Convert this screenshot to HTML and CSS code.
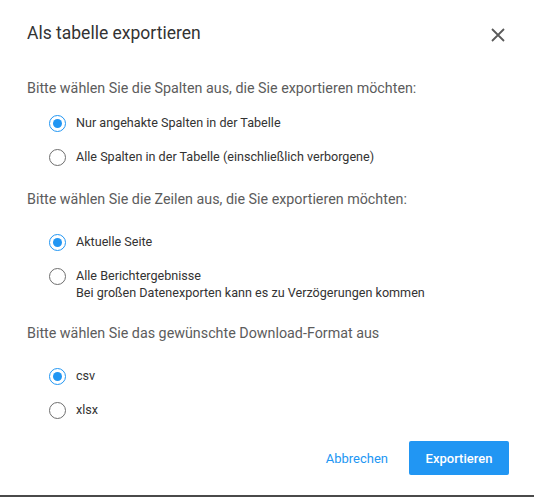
FILE: index.html
```html
<!DOCTYPE html>
<html lang="de">
<head>
<meta charset="utf-8">
<link rel="stylesheet" href="styles.css">
</head>
<body>
<div class="dialog">
  <div class="header">
    <h1 class="title">Als tabelle exportieren</h1>
    <button class="close" aria-label="Schließen">
      <svg width="14" height="14" viewBox="0 0 14 14"><path d="M1 1L13 13M13 1L1 13" stroke="#5a5a5a" stroke-width="1.8" fill="none"/></svg>
    </button>
  </div>

  <p class="label first">Bitte wählen Sie die Spalten aus, die Sie exportieren möchten:</p>
  <div class="options first">
    <div class="option"><span class="radio checked"></span><span class="text">Nur angehakte Spalten in der Tabelle</span></div>
    <div class="option"><span class="radio"></span><span class="text">Alle Spalten in der Tabelle (einschließlich verborgene)</span></div>
  </div>

  <p class="label">Bitte wählen Sie die Zeilen aus, die Sie exportieren möchten:</p>
  <div class="options">
    <div class="option"><span class="radio checked"></span><span class="text">Aktuelle Seite</span></div>
    <div class="option multi"><span class="radio"></span><span class="text">Alle Berichtergebnisse<br>Bei großen Datenexporten kann es zu Verzögerungen kommen</span></div>
  </div>

  <p class="label">Bitte wählen Sie das gewünschte Download-Format aus</p>
  <div class="options">
    <div class="option"><span class="radio checked"></span><span class="text">csv</span></div>
    <div class="option"><span class="radio"></span><span class="text">xlsx</span></div>
  </div>

  <div class="actions">
    <button class="btn-text">Abbrechen</button>
    <button class="btn-primary">Exportieren</button>
  </div>
</div>
<div class="backdrop"></div>
</body>
</html>
```
FILE: styles.css
```css
* { box-sizing: border-box; }
html, body { margin: 0; padding: 0; }
body {
  font-family: Roboto, "Noto Sans", Arial, sans-serif;
  background: #fff;
  width: 534px;
  height: 497px;
  overflow: hidden;
}
.dialog {
  height: 495px;
  background: #fff;
  padding: 21px 25px 0 27px;
}
.header {
  display: flex;
  justify-content: space-between;
  align-items: center;
  height: 24px;
}
.title {
  margin: 0;
  font-size: 17.5px;
  font-weight: 400;
  line-height: 24px;
  color: #333;
}
.close {
  border: 0;
  background: none;
  padding: 0;
  margin-right: 4px;
  margin-top: 3px;
  width: 14px;
  height: 14px;
  display: flex;
}
.label {
  margin: 22px 0 0;
  font-size: 14.3px;
  line-height: 20px;
  color: #5c5c5c;
}
.label.first { margin-top: 33px; }
.options {
  display: flex;
  flex-direction: column;
  gap: 14px;
  margin-top: 23px;
  padding-left: 22px;
}
.options.first { margin-top: 15px; }
.option {
  display: flex;
  align-items: center;
  gap: 10px;
  min-height: 20px;
  font-size: 12.6px;
  color: #333;
}
.option.multi { align-items: flex-start; }
.option.multi .text { line-height: 17px; margin-top: 1px; }
.option.multi .radio { margin-top: 2px; }
.radio {
  flex: none;
  width: 17px;
  height: 17px;
  border-radius: 50%;
  border: 1.5px solid #6e6e6e;
  display: flex;
  align-items: center;
  justify-content: center;
}
.radio.checked { border-color: #2196f3; }
.radio.checked::after {
  content: "";
  width: 9px;
  height: 9px;
  border-radius: 50%;
  background: #2196f3;
}
.text { line-height: 20px; }
.actions {
  display: flex;
  justify-content: flex-end;
  align-items: center;
  gap: 21px;
  margin-top: 21px;
}
.btn-text {
  border: 0;
  background: none;
  padding: 0;
  font-family: inherit;
  font-size: 13px;
  color: #2196f3;
}
.btn-primary {
  border: 0;
  border-radius: 2px;
  background: #2196f3;
  color: #fff;
  font-family: inherit;
  font-size: 13px;
  font-weight: 500;
  width: 100px;
  height: 34px;
}
.backdrop {
  height: 2px;
  background: #4a4a4a;
}
```
